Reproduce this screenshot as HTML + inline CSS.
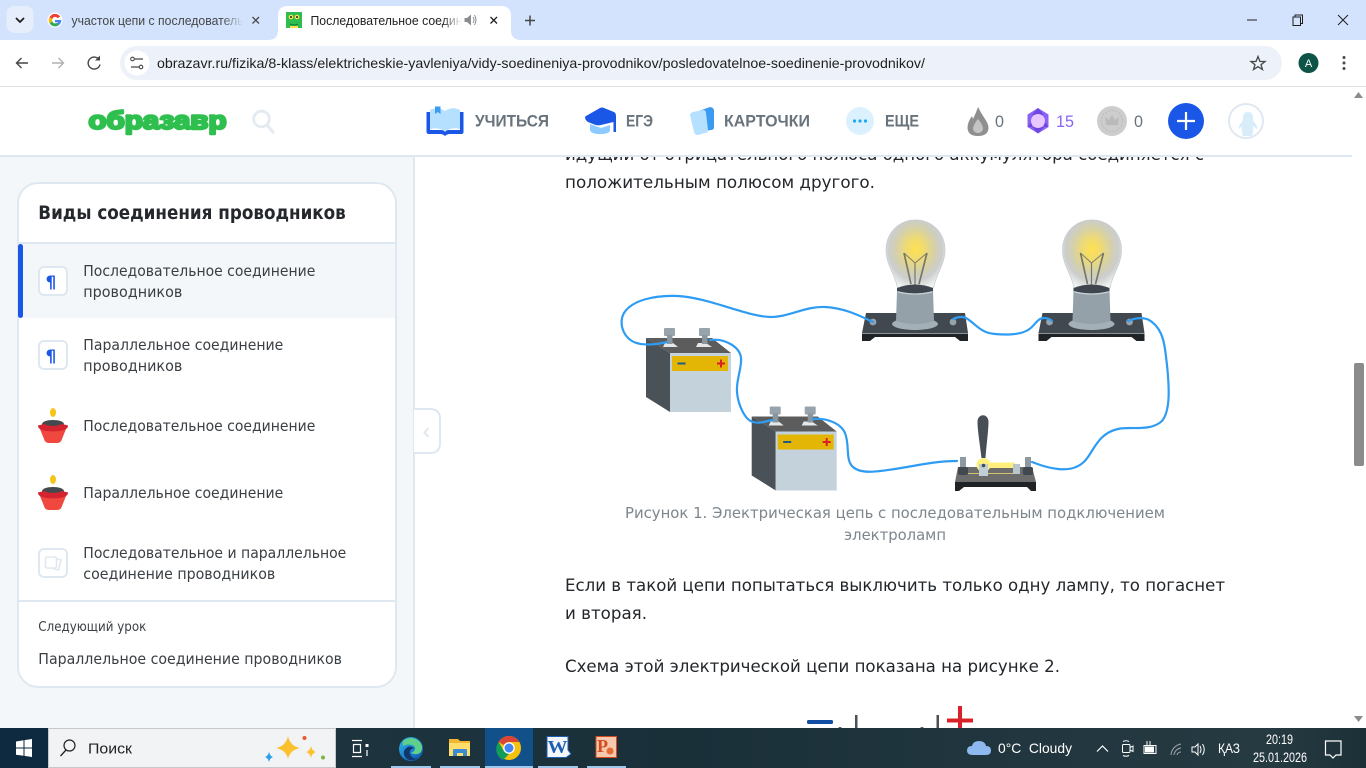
<!DOCTYPE html>
<html lang="ru">
<head>
<meta charset="utf-8">
<title>Последовательное соединение проводников</title>
<style>
html,body{margin:0;padding:0;width:1366px;height:768px;overflow:hidden;background:#fff}
svg{display:block;position:absolute;left:0;top:0}
text{font-family:"Liberation Sans","Noto Sans CJK SC",sans-serif;white-space:pre}
.s{font-family:"DejaVu Sans",sans-serif;font-size:15.2px;fill:#3a3f44}
.b{font-family:"DejaVu Sans",sans-serif;font-size:17.2px;fill:#23272b}
.c{font-family:"DejaVu Sans",sans-serif;font-size:15px;fill:#7d868d}
.n{font-size:16.5px;fill:#68737c;font-weight:700}
.t{fill:#fff;font-size:14px}
</style>
</head>
<body>
<svg width="1366" height="768" viewBox="0 0 1366 768" xmlns="http://www.w3.org/2000/svg">
<defs>
<radialGradient id="glow" cx="0.5" cy="0.43" r="0.6">
<stop offset="0" stop-color="#ffe04f"/>
<stop offset="0.25" stop-color="#f0db70"/>
<stop offset="0.55" stop-color="#d4d0ac"/>
<stop offset="0.75" stop-color="#cbcdcd"/>
<stop offset="0.9" stop-color="#e2e4e4"/>
<stop offset="1" stop-color="#f2f3f3"/>
</radialGradient>
<linearGradient id="tb" x1="0" x2="1" y1="0" y2="0">
<stop offset="0" stop-color="#203642"/>
<stop offset="0.5" stop-color="#1a3039"/>
<stop offset="0.93" stop-color="#263a42"/>
<stop offset="1" stop-color="#1c3038"/>
</linearGradient>
<linearGradient id="f1" x1="0" x2="1" y1="0" y2="0"><stop offset="0" stop-color="#d3e3fd" stop-opacity="0"/><stop offset="1" stop-color="#d3e3fd"/></linearGradient>
<linearGradient id="f2" x1="0" x2="1" y1="0" y2="0"><stop offset="0" stop-color="#fff" stop-opacity="0"/><stop offset="1" stop-color="#fff"/></linearGradient>
<linearGradient id="edge" x1="0" x2="1" y1="0" y2="1"><stop offset="0" stop-color="#2fb7e0"/><stop offset="0.55" stop-color="#1b7fd0"/><stop offset="1" stop-color="#0f4fa0"/></linearGradient>

<g id="lamp">
<path d="M866,313H965L968,333H862Z" fill="#41484f"/>
<rect x="862" y="333" width="106" height="1" fill="#8b9399"/>
<path d="M862,334H968V341H960L955,337H875L870,341H862Z" fill="#202326"/>
<circle cx="873" cy="322" r="3.4" fill="#96a3ab"/>
<circle cx="953" cy="322" r="3.4" fill="#96a3ab"/>
<path d="M897.5,288C895.5,275 886,265 886,250C886,232 900,220 915.5,220C931,220 945,232 945,250C945,265 935.5,275 933.5,288Z" fill="url(#glow)" stroke="#c6cacc" stroke-width=".7"/>
<g fill="none" stroke="#75776a">
<path d="M904,253L915,263L927,253" stroke-width=".9"/>
<path d="M904,253L911,284M927,253L919,284" stroke-width="1.700"/>
<path d="M915,263V285" stroke-width="1.200"/>
</g>
<ellipse cx="915" cy="324" rx="23" ry="6" fill="#a3b0b7"/>
<path d="M897,288Q915,281 933,288V291Q915,296 897,291Z" fill="#3f464d"/>
<path d="M897,291Q915,296 933,291L934,321Q915,327 896,321Z" fill="#95a1a8"/>
<path d="M898,292Q915,296 932,292" fill="none" stroke="#c6d0d6" stroke-width="1.200"/>
</g>

<g id="bat">
<path d="M646,338H712L731,353H670Z" fill="#5c5c5c"/>
<path d="M646,338L670,353V412L646,397Z" fill="#4a5157"/>
<rect x="670" y="353" width="61" height="59" fill="#c4d2db"/>
<rect x="672" y="356" width="56" height="15" fill="#e3b505"/>
<rect x="677.500" y="362.500" width="8" height="2" fill="#205a8c"/>
<path d="M717,363.500h8M721,359.500v8" stroke="#d9202a" stroke-width="2" fill="none"/>
<path d="M665,343H673L678,347H663Z" fill="#e4e8ea"/>
<path d="M698,343H706L712,347H696Z" fill="#e4e8ea"/>
<rect x="664" y="328" width="11" height="8" rx="1" fill="#98a4ab"/>
<rect x="667" y="335" width="5.500" height="9" fill="#8a969d"/>
<rect x="699" y="328" width="11" height="8" rx="1" fill="#98a4ab"/>
<rect x="702" y="335" width="5.500" height="9" fill="#8a969d"/>
</g>
</defs>

<!-- page backgrounds -->
<rect x="0" y="0" width="1366" height="768" fill="#fff"/>
<rect x="0" y="155" width="413" height="575" fill="#f4f7f9"/>
<rect x="413" y="155" width="2" height="575" fill="#dfe8f0"/>

<!-- article text -->
<text x="565" y="160" class="b" textLength="639" lengthAdjust="spacingAndGlyphs">идущий от отрицательного полюса одного аккумулятора соединяется с</text>
<text x="565" y="188" class="b" textLength="310" lengthAdjust="spacingAndGlyphs">положительным полюсом другого.</text>

<!-- lamps -->
<use href="#lamp"/>
<use href="#lamp" x="176.500"/>

<!-- batteries -->
<use href="#bat"/>
<use href="#bat" x="105.700" y="78.500"/>

<!-- switch -->
<path d="M958,467H1032L1036,482H955Z" fill="#6c6c6c"/>
<path d="M955,482H1036V491H1031L1027,487H964L959,491H955Z" fill="#202326"/>
<rect x="960" y="457" width="6" height="10" fill="#8e9aa1"/>
<rect x="1025" y="457" width="6" height="10" fill="#8e9aa1"/>
<rect x="958" y="467" width="10" height="8" rx="2" fill="#41484f"/>
<rect x="1023" y="467" width="10" height="8" rx="2" fill="#41484f"/>
<path d="M968,473.500H1013" stroke="#d3c36a" stroke-width="1"/>
<path d="M981.500,458C980,445 977.500,430 977.500,422C977.500,413 988.500,413 988.500,422C988.500,430 986.500,445 985.500,458Z" fill="#474e55"/>
<circle cx="983.500" cy="465" r="7" fill="#fff07d"/>
<path d="M988,462.500H1015V468H988Z" fill="#fff07d"/>
<rect x="1013" y="464" width="7" height="10" fill="#b9c6ce"/>
<path d="M979,464H988V476H979Z" fill="#c2ced5"/>
<circle cx="983.500" cy="465.500" r="1.800" fill="#444c53"/>

<!-- wires -->
<g fill="none" stroke="#2f9cf4" stroke-width="2.200" stroke-linecap="round">
<path d="M667,342C655,345 640,346 632,341C622,335 619,322 624,313C632,300 655,295 678,296C710,298 745,316 770,317C790,317 805,306 825,307C845,308 860,316 873,322"/>
<path d="M710,340C725,338 740,347 741,358C742,368 736,380 737,392C738,405 745,420 753,422C760,424 766,421 773,420"/>
<path d="M813,419C825,418 840,422 845,433C850,445 845,460 853,467C862,475 880,471 895,469C915,466 935,461 957,461"/>
<path d="M953,319C958,317 962,316 966,318C975,323 980,333 995,334C1005,335 1020,335 1028,330C1035,326 1037,318 1044,318C1047,318 1050,319 1052,321"/>
<path d="M1128,321C1135,318 1145,316 1152,322C1165,332 1165,350 1167,365C1169,385 1171,410 1162,421C1150,432 1130,426 1118,429C1100,433 1095,447 1088,457C1080,469 1068,470 1058,469C1048,468 1040,465 1032,462"/>
</g>

<!-- caption and paragraphs -->
<text x="625" y="518" class="c" textLength="540" lengthAdjust="spacingAndGlyphs">Рисунок 1. Электрическая цепь с последовательным подключением</text>
<text x="844" y="540" class="c" textLength="102" lengthAdjust="spacingAndGlyphs">электроламп</text>
<text x="565" y="591" class="b" textLength="660" lengthAdjust="spacingAndGlyphs">Если в такой цепи попытаться выключить только одну лампу, то погаснет</text>
<text x="565" y="619" class="b" textLength="82" lengthAdjust="spacingAndGlyphs">и вторая.</text>
<text x="565" y="672" class="b" textLength="495" lengthAdjust="spacingAndGlyphs">Схема этой электрической цепи показана на рисунке 2.</text>

<!-- figure 2 fragment -->
<rect x="807" y="720" width="26" height="4" rx="1.500" fill="#0f4ea3"/>
<rect x="855" y="715" width="2.500" height="13" fill="#4a5157"/>
<rect x="936.500" y="715" width="2.500" height="13" fill="#4a5157"/>
<path d="M947,720.500H973M960,706V728" stroke="#d9202a" stroke-width="4" fill="none"/>
<circle cx="840" cy="729" r="2" fill="#4a5157"/>
<circle cx="922" cy="729" r="2" fill="#4a5157"/>

<!-- sidebar card -->
<rect x="18" y="183" width="378" height="504" rx="20" fill="#fff" stroke="#dfe8f0" stroke-width="2"/>
<text x="38.300" y="219" font-size="19" font-weight="700" fill="#24282c" style="font-family:'DejaVu Sans',sans-serif" textLength="307.500" lengthAdjust="spacingAndGlyphs">Виды соединения проводников</text>
<rect x="18" y="242" width="378" height="2" fill="#dfe8f0"/>
<rect x="19" y="244" width="376" height="74" fill="#f4f7f9"/>
<rect x="18" y="244" width="5" height="74" rx="2.500" fill="#1b57e6"/>

<rect x="39" y="267" width="28" height="28" rx="5" fill="#fff" stroke="#dfe8f0" stroke-width="2"/>
<text x="45.500" y="288" font-size="17" font-weight="700" fill="#1b57e6" style="font-family:'DejaVu Sans',sans-serif">¶</text>
<text x="83.300" y="276" class="s" textLength="232" lengthAdjust="spacingAndGlyphs">Последовательное соединение</text>
<text x="83.300" y="297" class="s" textLength="99" lengthAdjust="spacingAndGlyphs">проводников</text>

<rect x="39" y="341" width="28" height="28" rx="5" fill="#fff" stroke="#dfe8f0" stroke-width="2"/>
<text x="45.500" y="362" font-size="17" font-weight="700" fill="#1b57e6" style="font-family:'DejaVu Sans',sans-serif">¶</text>
<text x="83.300" y="350" class="s" textLength="200" lengthAdjust="spacingAndGlyphs">Параллельное соединение</text>
<text x="83.300" y="371" class="s" textLength="99" lengthAdjust="spacingAndGlyphs">проводников</text>

<g id="pot">
<ellipse cx="53" cy="412.500" rx="3" ry="4.500" fill="#f5c518"/>
<ellipse cx="53" cy="424" rx="11" ry="4" fill="#44494e"/>
<path d="M40,429H66L62,439Q61,443 57,443H49Q45,443 44,439Z" fill="#f0483e"/>
<path d="M38,426Q38,425 40,425L44,424Q53,428 62,424L66,425Q68,425 68,426Q68,431 53,431.500Q38,431 38,426Z" fill="#d32430"/>
</g>
<text x="83.300" y="431" class="s" textLength="232" lengthAdjust="spacingAndGlyphs">Последовательное соединение</text>
<use href="#pot" y="67"/>
<text x="83.300" y="498" class="s" textLength="200" lengthAdjust="spacingAndGlyphs">Параллельное соединение</text>

<rect x="39" y="549" width="28" height="28" rx="5" fill="#fff" stroke="#dfe8f0" stroke-width="2"/>
<path d="M47,557h8a1.500,1.500 0 0 1 1.500,1.500v8a1.500,1.500 0 0 1 -1.500,1.500h-8a1.500,1.500 0 0 1 -1.500,-1.500v-8a1.500,1.500 0 0 1 1.500,-1.500Z" fill="none" stroke="#dfe8f0" stroke-width="1.600"/>
<path d="M57,559l4,1 -2.500,10 -6,-1.500" fill="none" stroke="#dfe8f0" stroke-width="1.600"/>
<text x="83.300" y="558" class="s" textLength="263" lengthAdjust="spacingAndGlyphs">Последовательное и параллельное</text>
<text x="83.300" y="579" class="s" textLength="192" lengthAdjust="spacingAndGlyphs">соединение проводников</text>

<rect x="18" y="600" width="378" height="2" fill="#dfe8f0"/>
<text x="38.300" y="631" font-size="13" fill="#3a3f44" style="font-family:'DejaVu Sans',sans-serif" textLength="108" lengthAdjust="spacingAndGlyphs">Следующий урок</text>
<text x="38.300" y="664" class="s" textLength="303.700" lengthAdjust="spacingAndGlyphs">Параллельное соединение проводников</text>

<!-- sidebar toggle -->
<path d="M414,409H430Q440,409 440,419V443Q440,453 430,453H414" fill="#fff" stroke="#dfe8f0" stroke-width="2"/>
<path d="M428.500,428L424.500,432.500L428.500,437" fill="none" stroke="#dfe8f0" stroke-width="2"/>

<!-- site header -->
<rect x="0" y="87" width="1352" height="68" fill="#fff"/>
<rect x="0" y="155" width="1352" height="2" fill="#dfe8f0"/>

<!-- logo -->
<text x="88.500" y="129" font-size="25" font-weight="700" fill="#2fbf4f" stroke="#2fbf4f" stroke-width="2.400" stroke-linejoin="round" textLength="138" lengthAdjust="spacingAndGlyphs">образавр</text>
<circle cx="261.500" cy="119" r="7.800" fill="none" stroke="#e3ebf2" stroke-width="2.800"/>
<path d="M267,125L273,132" stroke="#e3ebf2" stroke-width="3.200" stroke-linecap="round"/>

<!-- book icon -->
<path d="M430,110Q438,106 445,111V131Q438,127 430,129Z" fill="#b5e0ff"/>
<path d="M460,110Q452,106 445,111V131Q452,127 460,129Z" fill="#b5e0ff"/>
<path d="M430,112H426.500V132Q426.500,134 429,134H440Q443,134 445,136Q447,134 450,134H461.500Q463.500,134 463.500,132V112H460V130H449Q446,130 445,132Q444,130 441,130H430Z" fill="#1b57e6"/>
<path d="M435,106.500H440.500V114L437.700,112L435,114Z" fill="#3c9bf0"/>
<text x="475" y="126.500" class="n" textLength="74" lengthAdjust="spacingAndGlyphs">УЧИТЬСЯ</text>

<!-- graduation cap icon -->
<path d="M590,124L601,128L610,125V130Q610,134 600,134Q591,134 590,130Z" fill="#8ccaff"/>
<path d="M586,116L600,108Q602,107 604,108L614,112Q616,113 616,116V132H613.500V122L601,125Q597,126 593,124L588,122Q585,120 585,117Z" fill="#1b57e6"/>
<text x="626" y="126.500" class="n" textLength="27" lengthAdjust="spacingAndGlyphs">ЕГЭ</text>

<!-- cards icon -->
<path d="M696,112L710,107Q713,107 714,110V127Q714,130 711,130L705,131Z" fill="#3c9bf0"/>
<path d="M693,112L703,110Q706,110 706,113L708,130Q708,133 705,133L698,135Q695,135 694,132L690,115Q690,113 693,112Z" fill="#b5e0ff"/>
<text x="724" y="126.500" class="n" textLength="86" lengthAdjust="spacingAndGlyphs">КАРТОЧКИ</text>

<!-- more icon -->
<circle cx="860" cy="121" r="14" fill="#dbf1fd"/>
<circle cx="854.500" cy="121" r="1.600" fill="#1da6f5"/><circle cx="860" cy="121" r="1.600" fill="#1da6f5"/><circle cx="865.500" cy="121" r="1.600" fill="#1da6f5"/>
<text x="885" y="126.500" class="n" textLength="34" lengthAdjust="spacingAndGlyphs">ЕЩЕ</text>

<!-- stats -->
<path d="M978,107Q981,113 985,119Q988.500,124 988.500,128Q988,136 978,136Q968,136 967.500,128Q967.500,122 972,116L973,119Q976,113 978,107Z" fill="#8f8f8f"/>
<path d="M978,119Q983,125 983,129Q982,133 978,133Q974,133 973,129Q973,125 978,119Z" fill="#c4c4c4"/>
<text x="995" y="127" font-size="17" fill="#68737c" textLength="9" lengthAdjust="spacingAndGlyphs">0</text>

<path d="M1038,108L1048.500,114.500V127L1038,133.500L1027.500,127V114.500Z" fill="#8a63f5"/>
<path d="M1038,108L1044,115H1032ZM1048.500,127L1044,120V127ZM1027.500,127L1032,120V127ZM1038,133.500L1032,127H1044Z" fill="#6f47e0"/>
<circle cx="1038" cy="121" r="7" fill="#e8c6ff"/>
<text x="1056" y="127" font-size="17" fill="#8a63f5" textLength="18" lengthAdjust="spacingAndGlyphs">15</text>

<circle cx="1112" cy="121" r="15" fill="#cdcdcd"/>
<circle cx="1112" cy="121" r="10.500" fill="none" stroke="#c0c0c0" stroke-width="1.500" stroke-dasharray="2 1.500"/>
<path d="M1106,125L1105,117L1109,120L1112,115L1115,120L1119,117L1118,125Z" fill="#bababa"/>
<text x="1134" y="127" font-size="17" fill="#68737c" textLength="9" lengthAdjust="spacingAndGlyphs">0</text>

<circle cx="1186" cy="121" r="18" fill="#1b57e6"/>
<path d="M1177,121H1195M1186,112V130" stroke="#fff" stroke-width="2.200"/>

<circle cx="1246" cy="121" r="17" fill="#fff" stroke="#dfe8f0" stroke-width="2"/>
<path d="M1248,112Q1253,112 1253,118Q1253,120 1254,122Q1258,126 1257,129L1253,126Q1254,131 1252,136H1243Q1241,131 1242,126L1239,129Q1238,126 1242,122Q1243,120 1243,118Q1243,112 1248,112Z" fill="#d8ecfa"/>

<!-- scrollbar -->
<rect x="1352" y="87" width="14" height="641" fill="#fff"/>
<path d="M1354,98L1358.500,92L1363,98Z" fill="#8c8c8c"/>
<rect x="1354" y="363" width="10" height="103" rx="2" fill="#8b8b8b"/>
<path d="M1354,716L1358.500,722L1363,716Z" fill="#8c8c8c"/>

<!-- browser chrome -->
<rect x="0" y="0" width="1366" height="40" fill="#d3e3fd"/>
<path d="M0,87V50Q0,40 10,40H1356Q1366,40 1366,50V87Z" fill="#fff"/>
<rect x="0" y="86" width="1366" height="1" fill="#e1e3e6"/>

<rect x="6.500" y="6" width="27" height="27" rx="8" fill="#e6eefc"/>
<path d="M16,18L20,22L24,18" fill="none" stroke="#1f1f1f" stroke-width="1.800"/>

<!-- tab 1 -->
<circle cx="55" cy="20" r="7.500" fill="#fff"/>
<path d="M60.200,16.500A6.300,6.300 0 0 0 49.500,17.200L52.200,19.300A3,3 0 0 1 57.600,18.200Z" fill="#ea4335"/>
<path d="M49.500,17.200A6.300,6.300 0 0 0 49.600,23.200L52.200,21.100A3,3 0 0 1 52.200,19.300Z" fill="#fbbc05"/>
<path d="M49.600,23.200A6.300,6.300 0 0 0 59,25L56.800,22.900A3,3 0 0 1 52.200,21.100Z" fill="#34a853"/>
<path d="M61.300,20H55V22.200H58.500A3,3 0 0 1 56.800,22.900L59,25A6.300,6.300 0 0 0 61.300,20Z" fill="#4285f4"/>
<text x="71.500" y="25" font-size="12.500" fill="#444746" textLength="172" lengthAdjust="spacingAndGlyphs">участок цепи с последователь</text>
<rect x="222" y="10" width="21" height="22" fill="url(#f1)"/>
<path d="M252.500,17L259,23.500M259,17L252.500,23.500" stroke="#444746" stroke-width="1.300"/>

<!-- active tab -->
<path d="M268,40Q278,40 278,30V16Q278,6 288,6H501Q511,6 511,16V30Q511,40 521,40Z" fill="#fff"/>
<rect x="286" y="12" width="16" height="16" fill="#2ebd4e"/>
<circle cx="291" cy="17" r="2.300" fill="#ffe14a"/><circle cx="297" cy="17" r="2.300" fill="#ffe14a"/>
<circle cx="291" cy="17" r="1" fill="#222"/><circle cx="297" cy="17" r="1" fill="#222"/>
<path d="M290,24Q294,26 298,24" stroke="#174" stroke-width="1" fill="none"/>
<path d="M290,28V26H298V28Z" fill="#ffe14a"/>
<text x="310.500" y="25" font-size="12.500" fill="#1f1f1f" textLength="152" lengthAdjust="spacingAndGlyphs">Последовательное соедин</text>
<rect x="442" y="10" width="20" height="22" fill="url(#f2)"/>
<path d="M464.500,18H467L471,14.500V25.500L467,22H464.500Z" fill="#8a8d90"/>
<path d="M473,17Q475,20 473,23M474.500,15Q477.500,20 474.500,25" fill="none" stroke="#8a8d90" stroke-width="1"/>
<path d="M490.500,17L497,23.500M497,17L490.500,23.500" stroke="#1f1f1f" stroke-width="1.300"/>
<path d="M525,20.500H535M530,15.500V25.500" stroke="#444746" stroke-width="1.500"/>

<!-- window controls -->
<rect x="1247" y="19.500" width="10" height="1" fill="#1f1f1f"/>
<rect x="1293" y="17" width="7.500" height="8.500" fill="none" stroke="#1f1f1f" stroke-width="1"/>
<path d="M1295,17V15H1302.500V23.500H1300.500" fill="none" stroke="#1f1f1f" stroke-width="1"/>
<path d="M1338,15L1348,25M1348,15L1338,25" stroke="#1f1f1f" stroke-width="1"/>

<!-- toolbar -->
<path d="M28,63H17M21.500,58L16.500,63L21.500,68" fill="none" stroke="#444746" stroke-width="1.400"/>
<path d="M52,63H63M58.500,58L63.500,63L58.500,68" fill="none" stroke="#b0b2b5" stroke-width="1.400"/>
<path d="M99,59.500A6,6 0 1 0 100,64.500" fill="none" stroke="#444746" stroke-width="1.400"/>
<path d="M100,55.500V60.500H95Z" fill="#444746"/>
<rect x="120" y="46" width="1162" height="34" rx="17" fill="#edf2fa"/>
<circle cx="137" cy="63" r="12.500" fill="#fff"/>
<path d="M134,59H143M131,67H139" stroke="#444746" stroke-width="1.200"/>
<circle cx="132.500" cy="59" r="1.800" fill="#fff" stroke="#444746" stroke-width="1.100"/>
<circle cx="141" cy="67" r="1.800" fill="#fff" stroke="#444746" stroke-width="1.100"/>
<text x="157" y="68" font-size="14" fill="#1f1f1f" textLength="768" lengthAdjust="spacingAndGlyphs">obrazavr.ru/fizika/8-klass/elektricheskie-yavleniya/vidy-soedineniya-provodnikov/posledovatelnoe-soedinenie-provodnikov/</text>
<path d="M1258,56.500L1260,61.500H1265L1261,64.700L1262.500,69.500L1258,66.700L1253.500,69.500L1255,64.700L1251,61.500H1256Z" fill="none" stroke="#444746" stroke-width="1.300"/>
<circle cx="1308.500" cy="63" r="10" fill="#0d5447"/>
<text x="1308.500" y="67" font-size="11" fill="#fff" text-anchor="middle">A</text>
<circle cx="1344" cy="57.500" r="1.500" fill="#444746"/><circle cx="1344" cy="63" r="1.500" fill="#444746"/><circle cx="1344" cy="68.500" r="1.500" fill="#444746"/>

<!-- taskbar -->
<rect x="0" y="728" width="1366" height="40" fill="url(#tb)"/>
<rect x="0" y="728" width="48" height="40" fill="#0d2a40"/>
<path d="M16,741.500L23.500,740.300V747.500H16ZM24.500,740.100L32,739V747.500H24.500ZM16,748.500H23.500V755.800L16,754.700ZM24.500,748.500H32V757L24.500,755.900Z" fill="#fff"/>
<rect x="48.500" y="728.500" width="287" height="39" fill="#f2f3f5" stroke="#c6c8ca"/>
<circle cx="69.500" cy="745.500" r="5.500" fill="none" stroke="#222" stroke-width="1.200"/>
<path d="M66,750L60.500,756" stroke="#222" stroke-width="1.300"/>
<text x="88" y="753.500" font-size="14.500" fill="#222" textLength="44" lengthAdjust="spacingAndGlyphs">Поиск</text>
<path d="M288,736Q290,746 300,748Q290,750 288,759Q286,750 276,748Q286,746 288,736Z" fill="#fbc02d"/>
<path d="M311,746Q312,751 316,752Q312,753 311,758Q310,753 306,752Q310,751 311,746Z" fill="#fbc02d"/>
<path d="M269,752Q270,756 273,757Q270,758 269,762Q268,758 265,757Q268,756 269,752Z" fill="#2a9fe8"/>
<circle cx="304.500" cy="738" r="2" fill="#ea5a2a"/>
<circle cx="323" cy="757.500" r="2" fill="#7cb342"/>

<g fill="none" stroke="#fff" stroke-width="1.200">
<path d="M352,740.500H362M352,756.500H362M353.500,744.500H360.500V752.500H353.500Z"/>
<path d="M367,750V756"/>
</g>
<rect x="365.500" y="744" width="3" height="3" fill="#fff"/>

<!-- edge -->
<circle cx="411" cy="749" r="12" fill="url(#edge)"/>
<path d="M403,741Q411,735 419,741Q424,746 421,752Q417,756 411,753Q417,750 414,746Q409,743 403,746Z" fill="#5fd08b"/>
<path d="M404,751Q408,744 414,748Q409,749 410,754Q413,760 418,758Q412,762 407,759Q403,756 404,751Z" fill="#12376f"/>

<!-- explorer -->
<path d="M449,739H458L460,741H470V755H449Z" fill="#f2b632"/>
<rect x="449" y="743" width="21" height="13" fill="#ffdd6b"/>
<path d="M453,756V750Q453,749 455,749H465Q467,749 467,750V756H463V753H457V756Z" fill="#3a8ad6"/>

<!-- chrome -->
<rect x="485" y="728" width="48" height="40" fill="#12508a"/>
<circle cx="509" cy="748" r="12" fill="#f4c20d"/>
<path d="M509,736A12,12 0 0 1 519.400,742H509A6,6 0 0 0 503.800,745L498.600,742A12,12 0 0 1 509,736Z" fill="#db4437"/>
<path d="M498.600,742L503.800,751L509,754L503,760A12,12 0 0 1 498.600,742Z" fill="#0f9d58"/>
<circle cx="509" cy="748" r="5.800" fill="#fff"/>
<circle cx="509" cy="748" r="4.500" fill="#4285f4"/>

<!-- word -->
<path d="M547,736.500H568V750L571,754L566,757.500H547Z" fill="#f4f7fb" stroke="#1f5fb0" stroke-width="1"/>
<text x="547.500" y="753" font-size="18" font-weight="700" fill="#1f5fb0" textLength="20" lengthAdjust="spacingAndGlyphs" style="font-family:'Liberation Serif',serif">W</text>

<!-- powerpoint -->
<rect x="596" y="736.500" width="20.500" height="21" fill="#f6c9ae" stroke="#d24a1e" stroke-width="1"/>
<text x="597" y="752" font-size="18" font-weight="700" fill="#d24a1e" style="font-family:'Liberation Serif',serif">P</text>
<circle cx="610" cy="751" r="3.500" fill="#e56a35"/>

<rect x="391" y="766" width="40" height="2" fill="#9cc8ec"/>
<rect x="440" y="766" width="40" height="2" fill="#9cc8ec"/>
<rect x="485" y="766" width="48" height="2" fill="#9cc8ec"/>
<rect x="538" y="766" width="40" height="2" fill="#9cc8ec"/>
<rect x="587" y="766" width="39" height="2" fill="#9cc8ec"/>

<!-- tray -->
<path d="M973,755Q967,755 967,750.500Q967,746 972,746Q973,741 979,741Q985,741 986,746Q991,746 991,750.500Q991,755 986,755Z" fill="#8db9f0"/>
<text x="998" y="753" class="t" textLength="74" lengthAdjust="spacingAndGlyphs">0°C  Cloudy</text>
<path d="M1097,751.500L1102.500,746L1108,751.500" fill="none" stroke="#fff" stroke-width="1.200"/>
<g fill="none" stroke="#fff" stroke-width="1">
<rect x="1122.500" y="744.500" width="7.500" height="8" rx="1"/>
<path d="M1130,747.500L1133,746V751.500L1130,750M1123,741.500Q1126,740 1129,741.500M1123,755.500Q1126,757 1129,755.500"/>
<rect x="1144" y="745.500" width="12" height="8"/>
<path d="M1156,748V751M1147,741V745M1150,741V745"/>
<path d="M1171,755A12,12 0 0 1 1181,744M1174,755A8,8 0 0 1 1181,748M1177,755A4,4 0 0 1 1181,752" stroke="#9fa8ad"/>
<path d="M1192,747H1195L1198,744V755L1195,752H1192ZM1200,746Q1202,749.500 1200,753M1202.500,744Q1206,749.500 1202.500,755"/>
</g>
<rect x="1145" y="746.500" width="9" height="6" fill="#fff"/>
<text x="1218" y="753" class="t" font-size="13.500" textLength="22" lengthAdjust="spacingAndGlyphs">ҚАЗ</text>
<text x="1266" y="744" class="t" style="font-size:14px" textLength="27" lengthAdjust="spacingAndGlyphs">20:19</text>
<text x="1253" y="762" class="t" style="font-size:14px" textLength="54" lengthAdjust="spacingAndGlyphs">25.01.2026</text>
<path d="M1325.500,741H1341V755H1336L1333,758L1330,755H1325.500Z" fill="none" stroke="#fff" stroke-width="1.200"/>
</svg>
</body>
</html>
